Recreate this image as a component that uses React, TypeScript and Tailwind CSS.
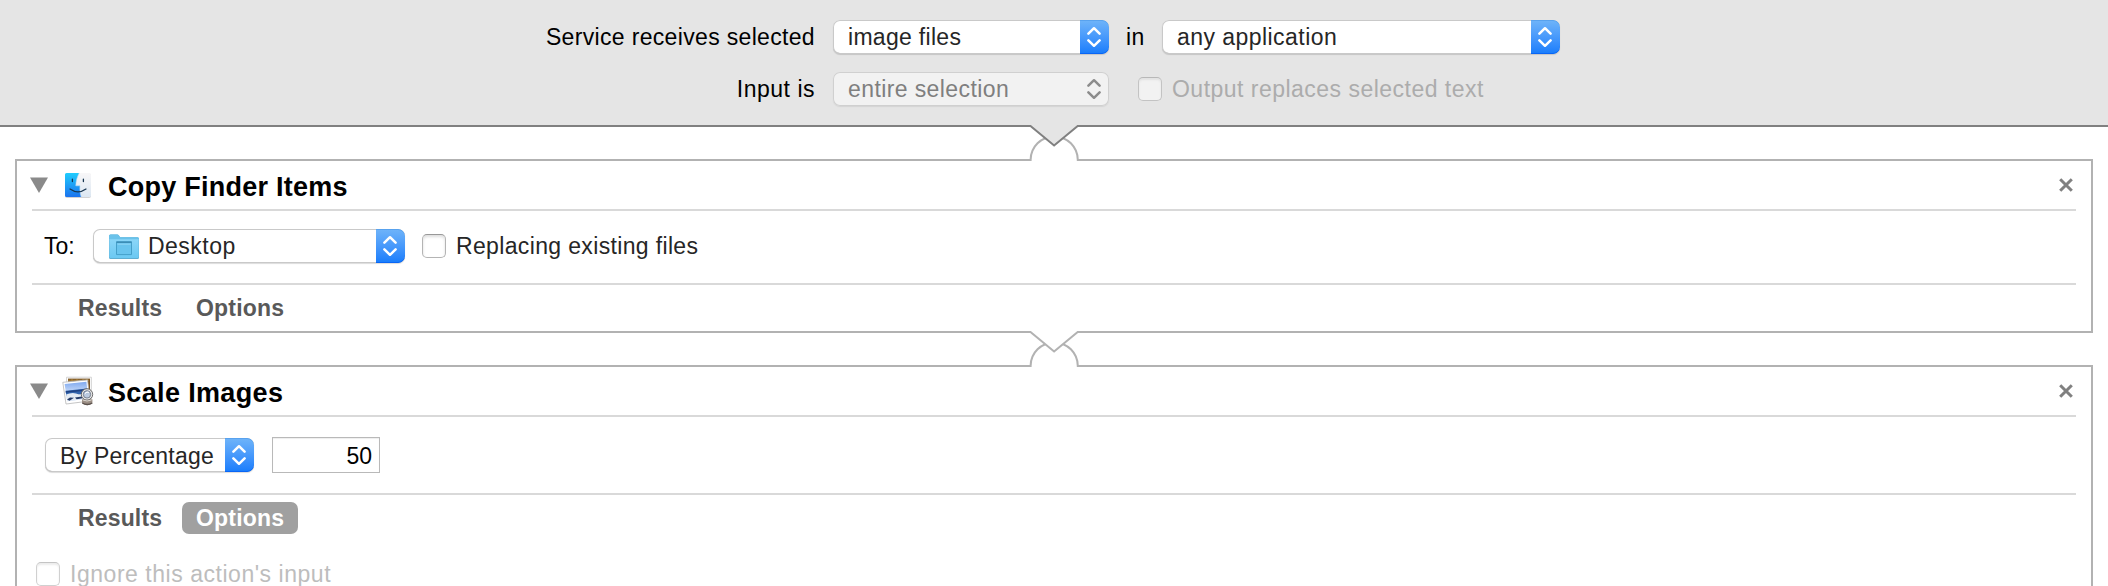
import type { ReactNode } from "react";

function Chevrons({ className }: { className: string }) {
  return (
    <svg viewBox="0 0 14 22" className={`h-[22px] w-[14px] ${className}`} fill="none" stroke="currentColor" strokeWidth="2.5" strokeLinecap="round" strokeLinejoin="round">
      <path d="M1.4 7.6 7 2.2l5.6 5.4M1.4 14.4 7 19.8l5.6-5.4" />
    </svg>
  );
}

function Select({ children, className, disabled = false }: { children: ReactNode; className: string; disabled?: boolean }) {
  return (
    <div
      className={`flex h-[34px] shrink-0 overflow-hidden rounded-[7px] ${
        disabled
          ? "bg-[#f2f2f2] text-[#7f7f7f] shadow-[inset_0_0_0_1px_#d0d0d0,0_1px_1px_#d4d4d4]"
          : "bg-white text-[#262626] shadow-[inset_0_0_0_1px_#c9c9c9,inset_0_-1px_0_#b0b0b0,0_1px_1px_rgba(0,0,0,0.14)]"
      } ${className}`}
    >
      <div className="flex min-w-0 flex-1 items-center whitespace-nowrap leading-[34px]">{children}</div>
      <div
        className={`flex w-[29px] shrink-0 items-center justify-center ${
          disabled
            ? "text-[#8c8c8c]"
            : "rounded-r-[7px] bg-linear-to-b from-[#6fb4f9] to-[#157cfc] text-white shadow-[inset_0_1px_0_#58a2ee,inset_0_-1px_0_#0a66f5]"
        }`}
      >
        <Chevrons className="-ml-px -mt-px" />
      </div>
    </div>
  );
}

function Checkbox({ tone = "normal" }: { tone?: "normal" | "gray" | "faint" }) {
  const tones = {
    normal: "border-[#b4b4b4] border-t-[#989898] bg-white shadow-[inset_0_2px_3px_#dedede]",
    gray: "border-[#c3c3c3] border-t-[#b8b8b8] bg-[#f2f2f2] shadow-[inset_0_2px_2px_#e2e2e2]",
    faint: "border-[#d0d0d0] border-t-[#c4c4c4] bg-white shadow-[inset_0_2px_2px_#ececec]",
  };
  return <span className={`box-border size-6 shrink-0 rounded-[5px] border ${tones[tone]}`} />;
}

function Connector({ className, fill, stroke }: { className: string; fill: string; stroke: string }) {
  return (
    <svg viewBox="0 0 52 37" className={`absolute left-[1028px] h-[37px] w-[52px] ${className}`} fill="none" strokeWidth="2">
      <path d="M2.5 0H50V37H2.5Z" fill="#fff" />
      <path d="M2.6 36V35A23.6 23.6 0 0 1 49.8 35V36" stroke="#b2b2b2" />
      <path d="M2 0V1L26.1 20.5 50.2 1V0Z" fill={fill} />
      <path d="M0 1H2.5L26.1 20.5 49.7 1H52" stroke={stroke} />
    </svg>
  );
}

function FinderIcon() {
  return (
    <svg viewBox="0 0 28 28" className="h-7 w-7">
      <defs>
        <linearGradient id="finderBlue" x2="0" y2="1">
          <stop stopColor="#20ccfd" />
          <stop offset="1" stopColor="#1b73ee" />
        </linearGradient>
        <linearGradient id="finderWhite" x2="0" y2="1">
          <stop stopColor="#f8f7f8" />
          <stop offset="1" stopColor="#dce7f2" />
        </linearGradient>
      </defs>
      <rect x="1" y="2.6" width="26" height="24.4" rx="2" fill="#d2d2d4" />
      <rect x="1" y="2" width="26" height="24" rx="1.5" fill="url(#finderWhite)" />
      <path d="M2.5 2H15.2C13.2 6 12 9.5 11.8 14.8H16C15.7 18.5 16 22 17.2 26H2.5Q1 26 1 24.5V3.5Q1 2 2.5 2Z" fill="url(#finderBlue)" />
      <path d="M15.2 2C13.2 6 12 9.5 11.8 14.8H16C15.7 18.5 16 22 17.2 26" fill="none" stroke="#b9d8ee" strokeWidth=".6" />
      <path d="M8.4 8.2v2.4M19.4 8.2v2.4" stroke="#173551" strokeWidth="1.3" strokeLinecap="round" />
      <path d="M6 18Q14 23.6 22 18" fill="none" stroke="#173551" strokeWidth="1.2" strokeLinecap="round" />
    </svg>
  );
}

function PreviewIcon() {
  return (
    <svg viewBox="0 0 32 30" className="h-[30px] w-8">
      <defs>
        <linearGradient id="sky" x2="0" y2="1">
          <stop stopColor="#7fa9ef" />
          <stop offset=".5" stopColor="#c4d8f8" />
        </linearGradient>
      </defs>
      <path d="M4.5 1.2H29.4V23H4.5Z" fill="#fbfbfb" stroke="#cbcbcb" strokeWidth=".8" />
      <path d="M6 2.6H28V14H6Z" fill="#7a5526" />
      <path d="M6 4.2h21M10 3v3M15 3v3M21 3v3M25 3v3" stroke="#b98e43" strokeWidth=".8" />
      <path d="M.8 6.3 25.6 3.9 28 25 4 28Z" fill="#fff" stroke="#b6b6b6" strokeWidth=".8" />
      <path d="M2.6 8 24.4 5.8 26.2 22.6 5.2 25.3Z" fill="url(#sky)" />
      <path d="M3.6 14.8 25 12.6 25.7 17.7 4.3 20Z" fill="#3465ad" />
      <path d="M3.7 15.2 25 13 25.2 14.4 3.9 16.8Z" fill="#1d4183" />
      <path d="M4.1 18.4Q11 15.4 17 18.4L25.8 17.4V22.6L5.2 25.3Z" fill="#e3ebf4" />
      <path d="M5 23.6l3-2.2 4 .3-4.5 3zM13 21.4l7-1 .6 1.8-6 1z" fill="#243b68" />
      <path d="M20 23.3h10.4v4.2q-5 3.4-10.4 0Z" fill="#9b8e84" />
      <path d="M20.4 27q4.8 3 9.8 0" fill="none" stroke="#5c534e" strokeWidth="1.3" />
      <circle cx="25" cy="18.4" r="4.8" fill="#b4c4dc" fillOpacity=".85" stroke="#e8e8e8" strokeWidth="2" />
      <circle cx="25" cy="18.4" r="5.7" fill="none" stroke="#4b4a4b" strokeWidth=".8" />
      <circle cx="25" cy="18.4" r="3.7" fill="none" stroke="#5d636e" strokeWidth=".7" />
      <path d="M22.9 17.7q1.7-2.3 4-1.2" fill="none" stroke="#fff" strokeWidth="1.1" />
      <path d="M20.8 24q4.2 2 8.7 0" fill="none" stroke="#ded9d2" strokeWidth="1" />
    </svg>
  );
}

function FolderIcon() {
  return (
    <svg viewBox="0 0 30 25" className="h-[25px] w-[30px]">
      <defs>
        <linearGradient id="folder" x2="0" y2="1">
          <stop stopColor="#8bd6f8" />
          <stop offset="1" stopColor="#6bc8f2" />
        </linearGradient>
      </defs>
      <path d="M0 2Q0 .5 1.5.5H8.5Q9.7.5 10.3 2L11 3.2H28.5Q30 3.2 30 4.8V23.5Q30 25 28.5 25H1.5Q0 25 0 23.5Z" fill="#5faed2" />
      <path d="M0 2Q0 .5 1.5.5H8.5Q9.7.5 10.3 2L11 3.2H28.5Q30 3.2 30 4.8V6H0Z" fill="#6ac2ea" />
      <path d="M.3 5.3H29.7V22.8Q29.7 24 28.5 24H1.5Q.3 24 .3 22.8Z" fill="url(#folder)" />
      <path d="M7.5 7.8H22.5V20.6H7.5Z" fill="#69c4ee" stroke="#459fc9" />
      <path d="M7.5 8.2h15" stroke="#3c8db6" strokeWidth="1.6" />
      <path d="M8.5 10.2h13" stroke="#9adcf8" strokeWidth=".8" />
    </svg>
  );
}

function ActionHeader({ icon, title, className }: { icon: ReactNode; title: string; className: string }) {
  return (
    <div className="mx-[15px] flex h-[50px] shrink-0 items-center border-b-2 border-[#d9d9d9]">
      <svg viewBox="0 0 18 16" className="-ml-[2px] h-4 w-[18px] shrink-0 fill-[#8a8a8a]">
        <path d="M0 .5H18L9 16Z" />
      </svg>
      <div className="ml-[14px] flex w-8 shrink-0 justify-center">{icon}</div>
      <h2 className={`ml-[14px] flex-1 whitespace-nowrap pt-[4px] text-[27px] font-bold leading-[34px] text-black ${className}`}>{title}</h2>
      <svg viewBox="0 0 14 14" className="mb-px mr-[3px] size-[14px]" stroke="#808080" strokeWidth="3">
        <path d="M1.2 1.2 12.8 12.8M12.8 1.2 1.2 12.8" />
      </svg>
    </div>
  );
}

export default function App() {
  return (
    <main className="relative flex h-[586px] w-[2108px] flex-col overflow-hidden bg-white font-['Liberation_Sans',Arial,sans-serif] text-[23px] text-black">
      <header className="flex h-[127px] shrink-0 flex-col gap-[18px] border-b-2 border-[#808080] bg-[#e5e5e5] pt-5">
        <div className="flex h-[34px] items-center whitespace-nowrap leading-[34px]">
          <span className="w-[815px] text-right tracking-[0.33px]">Service receives selected</span>
          <Select className="ml-[18px] w-[276px]"><span className="pl-[15px] tracking-[0.3px]">image files</span></Select>
          <span className="ml-[17px] w-[36px] tracking-[0.5px]">in</span>
          <Select className="w-[398px]"><span className="pl-[15px] tracking-[0.45px]">any application</span></Select>
        </div>
        <div className="flex h-[34px] items-center whitespace-nowrap leading-[34px]">
          <span className="w-[815px] text-right tracking-[0.5px]">Input is</span>
          <Select disabled className="ml-[18px] w-[276px]"><span className="pl-[15px] tracking-[0.4px]">entire selection</span></Select>
          <label className="ml-[29px] flex items-center gap-[10px] text-[#acacac]">
            <Checkbox tone="gray" />
            <span className="tracking-[0.48px]">Output replaces selected text</span>
          </label>
        </div>
      </header>

      <section className="mx-[15px] mt-8 flex h-[174px] shrink-0 flex-col border-2 border-[#b2b2b2]">
        <ActionHeader icon={<FinderIcon />} title="Copy Finder Items" className="tracking-[0.25px]" />
        <div className="mx-[15px] flex h-[74px] shrink-0 items-center border-b-2 border-[#d9d9d9] pb-[2px] leading-[34px]">
          <span className="ml-[12px] w-[49px]">To:</span>
          <Select className="w-[312px]">
            <span className="ml-4"><FolderIcon /></span>
            <span className="ml-[9px] tracking-[0.48px]">Desktop</span>
          </Select>
          <label className="ml-[17px] flex items-center gap-[10px] text-[#262626]">
            <Checkbox />
            <span className="tracking-[0.35px]">Replacing existing files</span>
          </label>
        </div>
        <nav className="flex items-center pl-[61px] pt-[7px] font-bold leading-8 text-[#595959]">
          <span className="w-[118px] tracking-[0.15px]">Results</span>
          <span className="tracking-[0.2px]">Options</span>
        </nav>
      </section>

      <section className="mx-[15px] mt-8 flex h-[300px] shrink-0 flex-col border-2 border-[#b2b2b2]">
        <ActionHeader icon={<PreviewIcon />} title="Scale Images" className="tracking-[0.35px]" />
        <div className="mx-[15px] flex h-[78px] shrink-0 items-center border-b-2 border-[#d9d9d9] leading-[34px]">
          <Select className="ml-[13px] w-[209px]"><span className="pl-[15px] pt-[2px] tracking-[0.25px]">By Percentage</span></Select>
          <div className="ml-[18px] h-9 w-[108px] border border-[#b9b9b9] pr-[7px] pt-px text-right text-black shadow-[inset_0_1px_1px_#eeeeee]">50</div>
        </div>
        <nav className="flex items-center pl-[61px] pt-[7px] font-bold leading-8 text-[#595959]">
          <span className="w-[104px] tracking-[0.15px]">Results</span>
          <span className="h-8 w-[116px] rounded-[7px] bg-[#a0a0a0] pl-[14px] tracking-[0.2px] text-white">Options</span>
        </nav>
        <label className="mt-[23px] flex items-center gap-[10px] pl-[19px] leading-[34px] text-[#bdbdbd]">
          <Checkbox tone="faint" />
          <span className="tracking-[0.53px]">Ignore this action's input</span>
        </label>
      </section>

      <Connector className="top-[125px]" fill="#e5e5e5" stroke="#808080" />
      <Connector className="top-[331px]" fill="#fff" stroke="#b2b2b2" />
    </main>
  );
}
